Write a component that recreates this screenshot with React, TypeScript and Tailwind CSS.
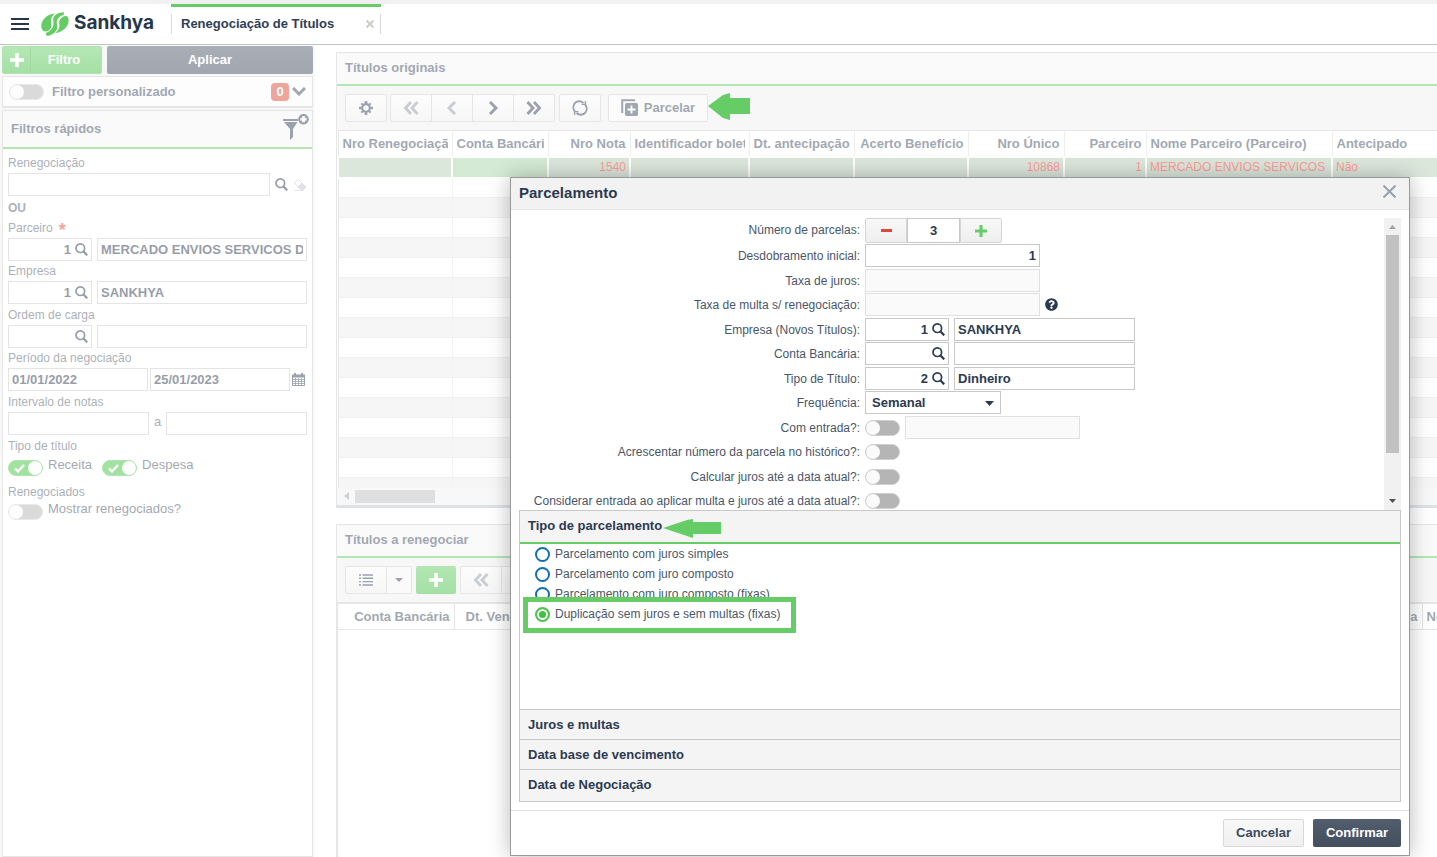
import { useState, type ReactNode } from "react";
import { FaQuestionCircle } from "react-icons/fa";

const inputClass =
  "h-[23px] min-w-0 rounded-none border border-[#c8c8c8] bg-white px-[3px] text-[13px] font-bold text-[#2c3a50] outline-none disabled:border-[#e0e0e0] disabled:bg-[#fafafa]";

const toolClass =
  "flex h-[28px] w-[42px] items-center justify-center border border-[#ccc] bg-gradient-to-b from-[#f9f9f9] to-[#eee] text-[#37445a]";

/* ---------- icons ---------- */

function SearchIcon() {
  return (
    <svg width="13" height="13" viewBox="0 0 13 13" fill="none" stroke="currentColor">
      <circle cx="5.3" cy="5.2" r="4.3" strokeWidth="1.7" />
      <path d="M8.3 8.3 L12.2 12.3" strokeWidth="2.2" />
    </svg>
  );
}

function EraserIcon() {
  return (
    <svg width="14" height="14" viewBox="0 0 14 14" stroke="#c0c4ca" strokeWidth="1">
      <path d="M1.5 5 L5.5 1.5 L9 5 L5 9 Z" fill="#fff" />
      <path d="M5 9 L9 5 L13 9 L10 12.5 L8 12.5 Z" fill="#c0c4ca" />
      <path d="M1.5 12.5 H6.5" />
    </svg>
  );
}

function GearIcon() {
  return (
    <svg width="14" height="14" viewBox="0 0 14 14" fill="none" stroke="currentColor">
      <circle cx="7" cy="7" r="3.8" strokeWidth="2.2" />
      <path d="M7 0 V2.4 M7 11.6 V14 M0 7 H2.4 M11.6 7 H14" strokeWidth="2.6" />
      <path d="M2.4 2.4 L3.8 3.8 M10.2 10.2 L11.6 11.6 M11.6 2.4 L10.2 3.8 M3.8 10.2 L2.4 11.6" strokeWidth="2" />
    </svg>
  );
}

function Chevrons({ d, faded }: { d: string; faded?: boolean }) {
  return (
    <svg
      width="16"
      height="14"
      viewBox="0 0 16 14"
      fill="none"
      stroke="currentColor"
      strokeWidth="2.9"
      className={faded ? "opacity-50" : ""}
    >
      <path d={d} />
    </svg>
  );
}

const DOUBLE_LEFT = "M8 1 L2.5 7 L8 13 M14.5 1 L9 7 L14.5 13";
const DOUBLE_RIGHT = "M1.5 1 L7 7 L1.5 13 M8 1 L13.5 7 L8 13";
const LEFT = "M11 1 L5 7 L11 13";
const RIGHT = "M5 1 L11 7 L5 13";

function RefreshIcon() {
  return (
    <svg width="16" height="16" viewBox="0 0 16 16" fill="none" stroke="currentColor" strokeWidth="1.8">
      <path d="M3 11.5 A6 6 0 0 1 11.5 3" />
      <path d="M13 4.5 A6 6 0 0 1 4.5 13" />
      <path d="M9.6 4.4 H13.4 V1" strokeWidth="1.4" />
      <path d="M6.4 11.6 H2.6 V15" strokeWidth="1.4" />
    </svg>
  );
}

function InstallmentsIcon() {
  return (
    <svg width="18" height="18" viewBox="0 0 18 18" fill="none">
      <path d="M1.2 14 V1.2 H14" stroke="currentColor" strokeWidth="2" />
      <rect x="4" y="4" width="13" height="13" rx="1.5" fill="currentColor" />
      <path d="M10.5 6.5 V14.5 M6.5 10.5 H14.5" stroke="#fff" strokeWidth="1.8" />
    </svg>
  );
}

function FunnelIcon() {
  return (
    <svg width="27" height="31" viewBox="0 0 27 31">
      <path d="M1 5 H16 V7 H1 Z M2 8 H15.5 L11 15 V23 L8 26 V15 Z" fill="#37445a" />
      <circle cx="21.5" cy="5.2" r="4.2" fill="#fff" stroke="#37445a" strokeWidth="2.2" />
      <path d="M18.7 2.4 L20 3.7 M24.3 2.4 L23 3.7 M18.7 8 L20 6.7 M24.3 8 L23 6.7" stroke="#37445a" strokeWidth="1.4" />
    </svg>
  );
}

function CalendarIcon() {
  return (
    <svg width="13" height="13" viewBox="0 0 13 13" stroke="#37445a">
      <path d="M0.5 2.5 H12.5 V12.5 H0.5 Z" fill="#fff" />
      <path d="M0 3 H13" strokeWidth="3" />
      <path d="M3 0 V2 M10 0 V2" strokeWidth="2" />
      <path d="M0 6.5 H13 M0 8.5 H13 M0 10.5 H13 M3.5 5 V12 M6.5 5 V12 M9.5 5 V12" strokeWidth="0.8" />
    </svg>
  );
}

function ListIcon() {
  return (
    <svg width="14" height="12" viewBox="0 0 14 12" stroke="currentColor" strokeWidth="1.4">
      <path d="M0 1 H2 M3.5 1 H14 M0 4.3 H2 M3.5 4.3 H14 M0 7.6 H2 M3.5 7.6 H14 M0 11 H2 M3.5 11 H14" />
    </svg>
  );
}

function PlusIcon({ size }: { size: number }) {
  return (
    <svg width={size} height={size} viewBox="0 0 14 14" stroke="currentColor" strokeWidth="3.6">
      <path d="M7 0 V14 M0 7 H14" />
    </svg>
  );
}

function Logo() {
  return (
    <svg width="28" height="25" viewBox="0 0 28 25">
      <path d="M14.5 1.5 C6 2 0 8 0.3 14.5 C0.5 18 2.5 19.5 4 19.5 C8 19.5 11.5 16 10.2 11.5 C9.5 8 10 4 14.5 1.5 Z" fill="#63cd63" />
      <path d="M23 0.3 C17 0.3 11.5 3.5 12.2 8.5 C13 13 12.5 17.5 5 21 C4.5 22.5 5.5 24 7 24 C13 22.5 17.5 18 16 12.5 C14.8 7.5 18.5 4 22.8 2.5 Z" fill="#63cd63" />
      <path d="M24 4 C20 5.5 17.5 8 18.3 12 C19 16 17 19 14 21 C20 20.5 27.5 16 27.7 8.5 C27.7 5.5 26.3 3.5 24 4 Z" fill="#63cd63" />
    </svg>
  );
}

/* ---------- form pieces ---------- */

function Toggle({ id, label, checked }: { id: string; label?: string; checked?: boolean }) {
  return (
    <span className="relative inline-block h-4 w-[35px] shrink-0">
      <input
        id={id}
        type="checkbox"
        aria-label={label}
        defaultChecked={checked}
        className="peer block h-4 w-[35px] appearance-none rounded-full border border-[#d0d0d0] bg-[#b5b5b5] checked:border-[#5fc75f] checked:bg-[#43c543]"
      />
      <span className="pointer-events-none absolute top-px left-px h-[14px] w-[14px] rounded-full bg-[#fafafa] peer-checked:right-px peer-checked:left-auto" />
      <svg
        width="11"
        height="9"
        viewBox="0 0 11 9"
        fill="none"
        stroke="#fff"
        strokeWidth="2.4"
        className="pointer-events-none absolute top-1 left-[6px] hidden peer-checked:block"
      >
        <path d="M1 4.5 L4 7.3 L10 1" />
      </svg>
    </span>
  );
}

function CodeSearch({ id, code, name }: { id: string; code?: string; name?: string }) {
  return (
    <>
      <div className="flex h-[23px] w-[84px] shrink-0 items-center border border-[#c8c8c8] bg-white pr-[3px] text-[#2c3a50]">
        <input
          id={id}
          defaultValue={code}
          className="w-0 flex-1 bg-transparent pr-1 text-right text-[13px] font-bold outline-none"
        />
        <button type="button" aria-label="Pesquisar">
          <SearchIcon />
        </button>
      </div>
      <input aria-label="Descrição" defaultValue={name} className={`${inputClass} ml-[5px] flex-1`} />
    </>
  );
}

function SideField({ id, label, required, children }: { id: string; label: string; required?: boolean; children: ReactNode }) {
  return (
    <div>
      <label htmlFor={id} className="flex h-5 items-center text-xs text-[#556070]">
        {label}
        {required && <span className="ml-[6px] h-5 text-lg leading-6 font-bold text-[#e04a38]">*</span>}
      </label>
      <div className="flex items-center">{children}</div>
    </div>
  );
}

function FormRow({ id, label, children }: { id: string; label: string; children: ReactNode }) {
  return (
    <div className="even:h-6 odd:h-[25px]">
      <div className="flex h-[23px] items-center">
        <label htmlFor={id} className="mr-[5px] w-[341px] shrink-0 text-right text-xs text-[#4a5668]">
          {label}
        </label>
        {children}
      </div>
    </div>
  );
}

/* ---------- sidebar ---------- */

function Sidebar() {
  return (
    <aside className="flex w-[315px] shrink-0 flex-col bg-[#f0f0f0] px-[2px] pt-px">
      <div className="flex gap-[5px] text-[13px] font-bold text-white">
        <button
          type="button"
          className="flex h-7 w-[100px] items-center rounded-[2px] border border-[#5cc45c] bg-gradient-to-b from-[#6ace6a] to-[#48c148]"
        >
          <span className="flex h-full w-7 items-center justify-center border-r border-[#48b048]">
            <PlusIcon size={14} />
          </span>
          <span className="flex-1 pr-1">Filtro</span>
        </button>
        <button type="button" className="h-7 flex-1 rounded-[2px] bg-gradient-to-b from-[#525d6d] to-[#434e5e]">
          Aplicar
        </button>
      </div>

      <div className="mt-[2px] flex h-8 items-center border border-b-2 border-[#ccc] bg-[#fafafa] px-[6px] text-[13px] font-bold text-[#434f62]">
        <Toggle id="filtro-personalizado" />
        <label htmlFor="filtro-personalizado" className="ml-2 flex-1">
          Filtro personalizado
        </label>
        <span className="flex h-[18px] w-[18px] items-center justify-center rounded bg-[#db4a38] text-white">0</span>
        <button type="button" aria-label="Expandir" className="ml-[3px] text-[#434f62]">
          <svg width="14" height="9" viewBox="0 0 14 9" fill="none" stroke="currentColor" strokeWidth="3">
            <path d="M1 1 L7 7 L13 1" />
          </svg>
        </button>
      </div>

      <section className="mt-[2px] flex-1 border border-[#ccc] bg-white">
        <header className="flex h-[38px] items-center justify-between border-b-2 border-[#66cc66] bg-[#f4f4f4] pr-[3px] pl-2">
          <h2 className="text-[13px] font-bold text-[#434f62]">Filtros rápidos</h2>
          <FunnelIcon />
        </header>
        <div className="px-[5px] pt-1">
          <SideField id="renegociacao" label="Renegociação">
            <input id="renegociacao" className={`${inputClass} flex-1`} />
            <button type="button" aria-label="Pesquisar" className="mx-[5px] text-[#2c3a50]">
              <SearchIcon />
            </button>
            <button type="button" aria-label="Limpar">
              <EraserIcon />
            </button>
          </SideField>
          <p className="h-[22px] text-xs leading-6 font-bold text-[#556070]">OU</p>
          <div className="mb-px">
            <SideField id="parceiro" label="Parceiro" required>
              <CodeSearch id="parceiro" code="1" name="MERCADO ENVIOS SERVICOS DE LOGISTICA" />
            </SideField>
            <SideField id="empresa" label="Empresa">
              <CodeSearch id="empresa" code="1" name="SANKHYA" />
            </SideField>
          </div>
          <div className="mb-px">
            <SideField id="ordem-carga" label="Ordem de carga">
              <CodeSearch id="ordem-carga" />
            </SideField>
            <SideField id="periodo" label="Período da negociação">
              <input id="periodo" defaultValue="01/01/2022" className={`${inputClass} flex-1`} />
              <input aria-label="Data final" defaultValue="25/01/2023" className={`${inputClass} mx-[2px] flex-1`} />
              <button type="button" aria-label="Calendário" className="mr-[2px]">
                <CalendarIcon />
              </button>
            </SideField>
          </div>
          <SideField id="notas" label="Intervalo de notas">
            <input id="notas" className={`${inputClass} flex-1`} />
            <span className="w-[17px] pb-1 text-center text-[13px] text-[#556070]">a</span>
            <input aria-label="Nota final" className={`${inputClass} flex-1`} />
          </SideField>
          <p className="h-5 text-xs leading-5 text-[#556070]">Tipo de título</p>
          <div className="flex h-5 items-end text-[13px] text-[#434f62]">
            <Toggle id="receita" checked />
            <label htmlFor="receita" className="ml-[5px] pb-[3px] leading-4">
              Receita
            </label>
            <span className="w-[10px]" />
            <Toggle id="despesa" checked />
            <label htmlFor="despesa" className="ml-[5px] pb-[3px] leading-4">
              Despesa
            </label>
          </div>
          <p className="h-6 text-xs leading-8 text-[#556070]">Renegociados</p>
          <div className="flex h-5 items-end text-[13px] text-[#434f62]">
            <Toggle id="mostrar" />
            <label htmlFor="mostrar" className="ml-[5px] pb-[3px] leading-4">
              Mostrar renegociados?
            </label>
          </div>
        </div>
      </section>
    </aside>
  );
}

/* ---------- background grids ---------- */

const columns = [
  { title: "Nro Renegociação", width: "w-[114px]", value: "" },
  { title: "Conta Bancária", width: "w-[96px]", value: "", focused: true },
  { title: "Nro Nota", width: "w-[82px]", value: "1540", right: true },
  { title: "Identificador boleto", width: "w-[119px]", value: "" },
  { title: "Dt. antecipação", width: "w-[105px]", value: "", right: true },
  { title: "Acerto Benefício", width: "w-[114px]", value: "", right: true },
  { title: "Nro Único", width: "w-[96px]", value: "10868", right: true },
  { title: "Parceiro", width: "w-[82px]", value: "1", right: true },
  { title: "Nome Parceiro (Parceiro)", width: "w-[186px]", value: "MERCADO ENVIOS SERVICOS DE LOGISTICA" },
  { title: "Antecipado", width: "", value: "Não" },
];

const emptyRows = Array.from({ length: 16 }, (_, i) => i);

function PanelHeader({ title }: { title: string }) {
  return (
    <header className="flex h-[33px] items-center border-b-2 border-[#66cc66] bg-[#f4f4f4] px-2 pb-px">
      <h2 className="text-[13px] font-bold text-[#434f62]">{title}</h2>
    </header>
  );
}

function OriginalsPanel() {
  return (
    <section className="border-t border-b-3 border-l border-[#ccc] border-b-[#bfc5c9] bg-[#efefef]">
      <PanelHeader title="Títulos originais" />
      <div className="flex h-11 items-center px-2">
        <button type="button" aria-label="Configurações" className={`${toolClass} rounded-[2px]`}>
          <GearIcon />
        </button>
        <div className="ml-[3px] flex -space-x-px">
          <button type="button" aria-label="Primeiro" className={`${toolClass} rounded-l-[2px]`}>
            <Chevrons d={DOUBLE_LEFT} faded />
          </button>
          <button type="button" aria-label="Anterior" className={toolClass}>
            <Chevrons d={LEFT} faded />
          </button>
          <button type="button" aria-label="Próximo" className={toolClass}>
            <Chevrons d={RIGHT} />
          </button>
          <button type="button" aria-label="Último" className={`${toolClass} rounded-r-[2px]`}>
            <Chevrons d={DOUBLE_RIGHT} />
          </button>
        </div>
        <button type="button" aria-label="Atualizar" className={`${toolClass} ml-1 rounded-[2px]`}>
          <RefreshIcon />
        </button>
        <button
          type="button"
          className="ml-[7px] flex h-[28px] w-[100px] items-center justify-center gap-[5px] rounded-[2px] border border-[#ccc] bg-[#f6f6f6] text-[13px] font-bold text-[#434f62]"
        >
          <InstallmentsIcon />
          Parcelar
        </button>
      </div>
      <table className="w-full table-fixed border-collapse border-l border-[#ccc] bg-white">
        <thead>
          <tr className="h-[26px] border-y border-[#ccc]">
            {columns.map((c) => (
              <th
                key={c.title}
                className={`${c.width} border-r border-[#ddd] p-0 px-1 text-[13px] font-bold text-[#434f62] last:border-r-0 ${c.right ? "text-right" : "text-left"}`}
              >
                <div className="overflow-hidden whitespace-nowrap">{c.title}</div>
              </th>
            ))}
          </tr>
        </thead>
        <tbody>
          <tr className="h-[21px] border-b border-[#ddd]">
            {columns.map((c) => (
              <td
                key={c.title}
                className={`border-2 border-white px-[3px] py-0 text-xs leading-4 text-[#f33] last:border-r-0 ${c.focused ? "bg-[#a8d4a8]" : "bg-[#b8cfb8]"} ${c.right ? "text-right" : "text-left"}`}
              >
                <div className="h-4 overflow-hidden whitespace-nowrap">{c.value}</div>
              </td>
            ))}
          </tr>
          {emptyRows.map((i) => (
            <tr key={i} className="h-5 border-b border-[#dcdede] odd:bg-[#ececec] last:h-[10px] last:border-0">
              {columns.map((c) => (
                <td key={c.title} className="border-r border-[#e4e4e4] p-0 last:border-r-0" />
              ))}
            </tr>
          ))}
        </tbody>
      </table>
      <div className="ml-px flex h-[17px] items-center bg-[#f1f1f1] px-[6px]">
        <svg width="5" height="8" viewBox="0 0 5 8">
          <path d="M5 0 V8 L0 4 Z" fill="#a0a0a0" />
        </svg>
        <div className="ml-[6px] h-[13px] w-20 bg-[#bfbfbf]" />
      </div>
    </section>
  );
}

function RenegotiatePanel() {
  const th = "border-r border-[#ccc] p-0 px-1 text-[13px] font-bold text-[#434f62] text-right";
  return (
    <section className="mt-4 flex flex-1 flex-col border-t border-l border-[#ccc] bg-[#efefef]">
      <PanelHeader title="Títulos a renegociar" />
      <div className="flex h-11 shrink-0 items-center px-2">
        <button type="button" aria-label="Modo grade" className={`${toolClass} rounded-l-[2px]`}>
          <ListIcon />
        </button>
        <button
          type="button"
          aria-label="Opções"
          className="-ml-px flex h-[28px] w-[26px] items-center justify-center rounded-r-[2px] border border-[#ccc] bg-[#f4f4f4]"
        >
          <svg width="8" height="4" viewBox="0 0 8 4">
            <path d="M0 0 H8 L4 4 Z" fill="#37445a" />
          </svg>
        </button>
        <button
          type="button"
          aria-label="Adicionar"
          className="ml-1 flex h-[28px] w-10 items-center justify-center rounded-[2px] bg-gradient-to-b from-[#66cc66] to-[#48c148] text-white"
        >
          <PlusIcon size={14} />
        </button>
        <div className="ml-1 flex -space-x-px">
          <button type="button" aria-label="Primeiro" className={`${toolClass} rounded-l-[2px]`}>
            <Chevrons d={DOUBLE_LEFT} faded />
          </button>
          <button type="button" aria-label="Anterior" className={toolClass}>
            <Chevrons d={LEFT} faded />
          </button>
        </div>
      </div>
      <div className="flex-1 border-l border-[#ccc] bg-white">
        <table className="w-full table-fixed border-collapse">
          <thead>
            <tr className="h-[27px] border-t-2 border-b border-[#ccc]">
              <th className={`${th} w-[116px]`}>Conta Bancária</th>
              <th className={`${th} w-[110px]`}>Dt. Vencimento</th>
              <th className={th} />
              <th className={`${th} w-[100px]`}>Empresa</th>
              <th className="w-[15px] p-0 pl-1 text-left text-[13px] font-bold text-[#434f62]">
                <div className="overflow-hidden whitespace-nowrap">Nome</div>
              </th>
            </tr>
          </thead>
        </table>
      </div>
    </section>
  );
}

/* ---------- dialog ---------- */

const installmentTypes = [
  "Parcelamento com juros simples",
  "Parcelamento com juro composto",
  "Parcelamento com juro composto (fixas)",
  "Duplicação sem juros e sem multas (fixas)",
];

function InstallmentsDialog() {
  const [count, setCount] = useState(3);
  const [type, setType] = useState(installmentTypes[3]);
  const stepClass =
    "flex h-[25px] w-[42px] items-center justify-center border border-[#d4d4d4] bg-gradient-to-b from-[#f8f8f8] to-[#eee]";
  const sectionClass =
    "flex h-[30px] w-full items-center border-t border-[#c8c8c8] bg-[#f4f4f4] px-2 text-left text-[13px] font-bold text-[#2c3a50] last:h-8 last:pb-[2px]";

  return (
    <div
      role="dialog"
      aria-labelledby="dialog-title"
      className="absolute top-[177px] right-[27px] w-[900px] border border-[#999] bg-white shadow-[0_0_20px_rgba(0,0,0,0.28)]"
    >
      <header className="flex h-8 items-center justify-between border-b border-[#e2e2e2] bg-[#f2f2f2] pr-[13px] pl-2">
        <h1 id="dialog-title" className="text-[15px] font-bold text-[#2c3a50]">
          Parcelamento
        </h1>
        <button type="button" aria-label="Fechar" className="pb-1">
          <svg width="13" height="13" viewBox="0 0 13 13" stroke="#98a0ab" strokeWidth="2">
            <path d="M0.5 0.5 L12.5 12.5 M12.5 0.5 L0.5 12.5" />
          </svg>
        </button>
      </header>

      <div className="px-2 py-2">
        <div className="flex h-[292px] overflow-hidden">
          <div className="flex-1">
            <div className="flex h-[26px] items-start">
              <label htmlFor="parcelas" className="mr-[5px] w-[341px] text-right text-xs leading-[25px] text-[#4a5668]">
                Número de parcelas:
              </label>
              <button type="button" aria-label="Diminuir" className={`${stepClass} rounded-l-[2px]`} onClick={() => setCount(count - 1)}>
                <span className="h-[3px] w-[11px] bg-[#db4a38]" />
              </button>
              <input
                id="parcelas"
                value={count}
                onChange={(e) => setCount(Number(e.target.value))}
                className="h-[25px] w-[53px] border border-[#c8c8c8] text-center text-[13px] font-bold text-[#2c3a50] outline-none"
              />
              <button
                type="button"
                aria-label="Aumentar"
                className={`${stepClass} rounded-r-[2px] text-[#66cc66]`}
                onClick={() => setCount(count + 1)}
              >
                <PlusIcon size={12} />
              </button>
            </div>
            <div>
              <FormRow id="desdobramento" label="Desdobramento inicial:">
                <input id="desdobramento" defaultValue="1" className={`${inputClass} w-[175px] text-right`} />
              </FormRow>
              <FormRow id="taxa-juros" label="Taxa de juros:">
                <input id="taxa-juros" disabled className={`${inputClass} w-[175px]`} />
              </FormRow>
              <FormRow id="taxa-multa" label="Taxa de multa s/ renegociação:">
                <input id="taxa-multa" disabled className={`${inputClass} w-[175px]`} />
                <FaQuestionCircle size={13} className="ml-[5px] text-[#2c3a50]" />
              </FormRow>
              <FormRow id="empresa-novos" label="Empresa (Novos Títulos):">
                <div className="flex w-[270px]">
                  <CodeSearch id="empresa-novos" code="1" name="SANKHYA" />
                </div>
              </FormRow>
              <FormRow id="conta" label="Conta Bancária:">
                <div className="flex w-[270px]">
                  <CodeSearch id="conta" />
                </div>
              </FormRow>
              <FormRow id="tipo-titulo" label="Tipo de Título:">
                <div className="flex w-[270px]">
                  <CodeSearch id="tipo-titulo" code="2" name="Dinheiro" />
                </div>
              </FormRow>
              <FormRow id="frequencia" label="Frequência:">
                <div className="relative w-[136px]">
                  <select
                    id="frequencia"
                    className="block h-[23px] w-full appearance-none border border-[#c8c8c8] bg-white px-[6px] text-[13px] leading-[20px] font-bold text-[#2c3a50] outline-none"
                  >
                    <option>Semanal</option>
                    <option>Quinzenal</option>
                    <option>Mensal</option>
                  </select>
                  <svg width="9" height="5" viewBox="0 0 9 5" className="pointer-events-none absolute top-[10px] right-[7px]">
                    <path d="M0 0 H9 L4.5 5 Z" fill="#2c3a50" />
                  </svg>
                </div>
              </FormRow>
              <FormRow id="com-entrada" label="Com entrada?:">
                <Toggle id="com-entrada" />
                <input aria-label="Valor da entrada" disabled className={`${inputClass} ml-[5px] w-[175px]`} />
              </FormRow>
              <FormRow id="historico" label="Acrescentar número da parcela no histórico?:">
                <Toggle id="historico" />
              </FormRow>
              <FormRow id="calcular-juros" label="Calcular juros até a data atual?:">
                <Toggle id="calcular-juros" />
              </FormRow>
              <FormRow id="considerar" label="Considerar entrada ao aplicar multa e juros até a data atual?:">
                <Toggle id="considerar" />
              </FormRow>
            </div>
          </div>
          <div className="flex w-[17px] flex-col items-center bg-[#f1f1f1]">
            <svg width="7" height="17" viewBox="0 0 7 17">
              <path d="M0 11 H7 L3.5 7 Z" fill="#a3a3a3" />
            </svg>
            <div className="h-[218px] w-[13px] bg-[#c1c1c1]" />
            <svg width="7" height="17" viewBox="0 0 7 17" className="mt-auto">
              <path d="M0 6 H7 L3.5 10 Z" fill="#505050" />
            </svg>
          </div>
        </div>

        <div className="border border-t-0 border-[#c8c8c8]">
          <button
            type="button"
            className="flex h-[34px] w-full items-center border-t border-b-2 border-t-[#c8c8c8] border-b-[#66cc66] bg-[#f4f4f4] px-2 pb-[2px] text-[13px] font-bold text-[#2c3a50]"
          >
            <span className="relative">
              Tipo de parcelamento
              <svg width="59" height="23" viewBox="0 0 59 23" className="absolute top-0 left-full">
                <path d="M1 12 L25 4 L31 3 V6 H59 V18 H31 V22 L25 20 Z" fill="#66cc66" />
              </svg>
            </span>
          </button>
          <div className="h-[165px] pl-[15px]">
            {installmentTypes.map((t) => (
              <label key={t} className="relative flex h-5 w-max items-center gap-[5px] text-xs text-[#4a5668]">
                <input
                  type="radio"
                  name="tipo-parcelamento"
                  checked={type === t}
                  onChange={() => setType(t)}
                  className="h-[15px] w-[15px] appearance-none rounded-full border-2 border-[#0e71b4] bg-white checked:border-[#4cc74c] checked:bg-[#3fc13f] checked:shadow-[inset_0_0_0_2px_#fff]"
                />
                {t}
                {t === installmentTypes[3] && (
                  <span className="pointer-events-none absolute -top-[7px] -right-4 -bottom-[9px] -left-3 border-5 border-[#66cc66]" />
                )}
              </label>
            ))}
          </div>
          <div>
            <button type="button" className={sectionClass}>
              Juros e multas
            </button>
            <button type="button" className={sectionClass}>
              Data base de vencimento
            </button>
            <button type="button" className={sectionClass}>
              Data de Negociação
            </button>
          </div>
        </div>
      </div>

      <footer className="flex justify-end gap-[9px] border-t border-[#e2e2e2] p-2 text-[13px] font-bold">
        <button
          type="button"
          className="h-7 w-[81px] rounded-[2px] border border-[#d8d8d8] bg-gradient-to-b from-[#f8f8f8] to-[#f0f0f0] text-[#3c495c]"
        >
          Cancelar
        </button>
        <button type="button" className="h-7 w-[88px] rounded-[2px] bg-gradient-to-b from-[#525d6d] to-[#434e5e] text-white">
          Confirmar
        </button>
      </footer>
    </div>
  );
}

export default function App() {
  return (
    <div className="relative flex min-h-screen flex-col overflow-hidden bg-white font-['Liberation_Sans',Arial,sans-serif]">
      <div className="h-1 bg-[#f1f1f1]" />
      <header className="flex h-[41px] items-start border-b border-[#c4c4c4]">
        <button type="button" aria-label="Menu" className="mt-[14px] ml-[11px] flex flex-col gap-[3px]">
          <span className="h-[2px] w-[18px] bg-[#27364b]" />
          <span className="h-[2px] w-[18px] bg-[#27364b]" />
          <span className="h-[2px] w-[18px] bg-[#27364b]" />
        </button>
        <div className="ml-3 flex w-[130px] items-center gap-[5px] pt-2">
          <Logo />
          <span className="-mt-[3px] font-['Inter',sans-serif] text-[19px] leading-6 font-bold text-[#27364b]">Sankhya</span>
        </div>
        <div className="w-[210px] border-t-3 border-[#66cc66]">
          <div className="mt-[7px] flex h-5 items-center border-x border-[#d5d9e4] px-[9px]">
            <span className="flex-1 text-[13px] font-bold text-[#2f3e55]">Renegociação de Títulos</span>
            <button type="button" aria-label="Fechar aba" className="-mr-[3px]">
              <svg width="8" height="8" viewBox="0 0 8 8" stroke="#ccc" strokeWidth="2">
                <path d="M0.5 0.5 L7.5 7.5 M7.5 0.5 L0.5 7.5" />
              </svg>
            </button>
          </div>
        </div>
      </header>

      <div className="relative flex flex-1">
        <Sidebar />
        <main className="flex min-w-0 flex-1 flex-col pt-[7px] pl-[21px]">
          <OriginalsPanel />
          <RenegotiatePanel />
        </main>
        <div className="absolute inset-0 bg-white/50" />
        <svg width="43" height="28" viewBox="0 0 43 28" className="absolute top-[48px] left-[707px]">
          <path d="M1 13 L16 2 L23 0 V5 H43 V21 H23 V27 L16 25 Z" fill="#66cc66" />
        </svg>
      </div>

      <InstallmentsDialog />
    </div>
  );
}
